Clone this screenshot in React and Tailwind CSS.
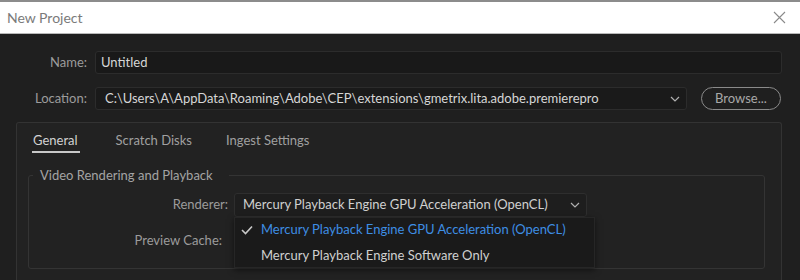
import React from "react";

function Chevron({ className = "" }) {
  return (
    <svg width="10" height="6" viewBox="0 0 10 6" className={className} fill="none">
      <path d="M1 1 L5 5 L9 1" stroke="#b0b0b0" strokeWidth="1.2" />
    </svg>
  );
}

export default function App() {
  return (
    <div
      className="w-[800px] h-[280px] overflow-hidden bg-[#1f1f1f] text-[13px] flex flex-col whitespace-nowrap"
      style={{ fontFamily: "Lato, 'Open Sans', sans-serif" }}
    >
      {/* Title bar */}
      <div className="h-[34px] flex-none bg-white border-t-2 border-[#8c8c8c] border-b border-b-[#b8b8b8] flex items-center justify-between pl-[7px] pr-[14px]">
        <span className="text-[14px] text-[#7a7a7a] leading-none">New Project</span>
        <svg width="13" height="13" viewBox="0 0 13 13" fill="none">
          <path d="M1 1 L12 12 M12 1 L1 12" stroke="#8a8a8a" strokeWidth="1.1" />
        </svg>
      </div>

      {/* Body */}
      <div className="flex-1 flex flex-col pl-[16px] pr-[18px] pt-[17px]">
        {/* Name */}
        <div className="flex items-center h-[23px]">
          <div className="w-[71px] text-right text-[#9c9c9c]">Name:</div>
          <div className="ml-[8px] flex-1 h-full bg-[#191919] border border-[#2c2c2c] rounded-[3px] flex items-center pl-[5px] text-[#d6d6d6]">
            Untitled
          </div>
        </div>

        {/* Location */}
        <div className="flex items-center h-[23px] mt-[13px]">
          <div className="w-[71px] text-right text-[#9c9c9c]">Location:</div>
          <div className="ml-[8px] w-[592px] h-full bg-[#1a1a1a] border border-[#2c2c2c] rounded-[3px] flex items-center justify-between pl-[9px] pr-[6px] text-[#d6d6d6]">
            <span>C:\Users\A\AppData\Roaming\Adobe\CEP\extensions\gmetrix.lita.adobe.premierepro</span>
            <Chevron />
          </div>
          <div className="ml-[14px] w-[80px] h-full rounded-full border border-[#8a8a8a] flex items-center justify-center text-[#a8a8a8]">
            Browse...
          </div>
        </div>

        {/* Outer panel */}
        <div className="mt-[12px] flex-1 border border-[#333333] border-b-0 rounded-t-[3px] bg-[#222222] flex flex-col">
          {/* Tabs */}
          <div className="flex pl-[16px] pt-[7px]">
            <div className="flex flex-col">
              <span className="leading-[20px] text-[#d2d2d2]">General</span>
              <div className="mt-[1px] h-[2px] -ml-[1px] w-[calc(100%+3px)] bg-[#c8c8c8]" />
            </div>
            <span className="ml-[38px] leading-[20px] text-[#a0a0a0]">Scratch Disks</span>
            <span className="ml-[34px] leading-[20px] text-[#a0a0a0]">Ingest Settings</span>
          </div>

          {/* Group */}
          <fieldset className="mt-[13px] ml-[11px] mr-[16px] border border-[#343434] rounded-[3px] pl-0 pr-0 pt-[9px] pb-[15px] min-w-0">
            <legend className="ml-[4px] pl-[7px] pr-[16px] leading-[18px] text-[#a4a4a4]">
              Video Rendering and Playback
            </legend>
            <div className="flex items-center h-[24px]">
              <div className="w-[199px] text-right text-[#9c9c9c]">Renderer:</div>
              <div className="relative ml-[6px] w-[353px] h-full">
                <div className="h-full bg-[#1e1e1e] border border-[#2e2e2e] rounded-[3px] flex items-center justify-between pl-[8px] pr-[6px] text-[#d0d0d0]">
                  <span>Mercury Playback Engine GPU Acceleration (OpenCL)</span>
                  <Chevron />
                </div>
                {/* Dropdown menu */}
                <div className="absolute left-0 top-[24px] w-[361px] h-[51px] bg-[#1a1a1a] border border-[#262626] shadow-[0_2px_6px_rgba(0,0,0,0.5)] z-10 flex flex-col">
                  <div className="h-[25px] flex items-center pl-[6px]">
                    <svg width="12" height="10" viewBox="0 0 12 10" fill="none" className="flex-none">
                      <path d="M1 5 L4.5 8.5 L11 1.5" stroke="#c8c8c8" strokeWidth="1.6" />
                    </svg>
                    <span className="ml-[8px] text-[#3e8ee4]">Mercury Playback Engine GPU Acceleration (OpenCL)</span>
                  </div>
                  <div className="h-[26px] pt-[2px] flex items-center pl-[26px] text-[#d0d0d0]">
                    Mercury Playback Engine Software Only
                  </div>
                </div>
              </div>
            </div>
            <div className="flex items-center h-[24px] mt-[12px]">
              <div className="w-[193px] text-right text-[#9c9c9c]">Preview Cache:</div>
            </div>
          </fieldset>
        </div>
      </div>
    </div>
  );
}
